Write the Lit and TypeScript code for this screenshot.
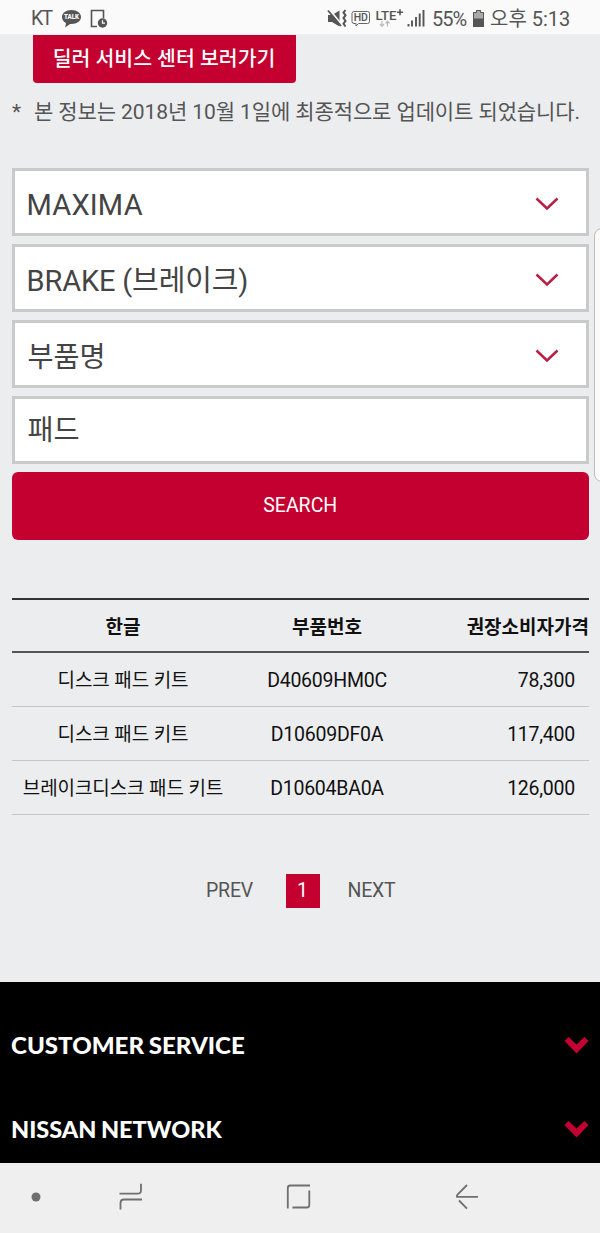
import { LitElement, html, css } from "lit";
import { customElement, property } from "lit/decorators.js";
import { styleMap } from "lit/directives/style-map.js";

const RED = "#c3002f";

@customElement("status-bar")
class StatusBar extends LitElement {
  static styles = css`
    :host { display: flex; align-items: center; height: 35px; box-sizing: border-box; padding: 3px 29px 0 31px;
      background: #fafafa; color: #555; font: 19.5px/32px Roboto, "Noto Sans CJK KR", sans-serif; border-bottom: 1px solid #eee; }
    svg { display: block; flex: none; }
    .carrier { width: 30px; font-size: 19.5px; letter-spacing: -1.8px; }
    .doc { margin-left: 8px; }
    .grow { flex: 1; }
    .pct { margin-left: 7px; width: 36px; font-size: 20px; letter-spacing: -1px; white-space: nowrap; }
    .bat { margin-left: 4px; }
    .time { margin-left: 5px; width: 81px; font-size: 20px; letter-spacing: 0; white-space: nowrap; }
    .talk { font: 900 6.5px Roboto, sans-serif; }
    .hd { font: 500 10.5px Roboto, sans-serif; }
    .lte { font: 500 12px Roboto, sans-serif; }
  `;
  render() {
    return html`
      <span class="carrier">KT</span>
      <svg width="21" height="20" viewBox="0 0 21 20">
        <path d="M10.500 1C5 1 1 4 1 8c0 2.700 1.600 4.800 4 6l-.8 4.600L9 15h1.500c5.500 0 9.500-3 9.500-7s-4-7-9.500-7z" fill="#555"/>
        <text class="talk" x="3" y="10.300" textLength="15" lengthAdjust="spacingAndGlyphs" fill="#fafafa">TALK</text>
      </svg>
      <svg class="doc" width="18" height="20" viewBox="0 0 18 20">
        <path d="M7 17.500H1.500V1.500h12V9" fill="none" stroke="#555" stroke-width="1.600"/>
        <circle cx="12.500" cy="14" r="4.700" fill="#555"/>
        <path d="M12.500 11.300V14.200h2.500" fill="none" stroke="#fafafa" stroke-width="1.200"/>
      </svg>
      <span class="grow"></span>
      <svg width="98" height="20" viewBox="0 0 98 20">
        <path d="M1 6h4l7.500-4.500v16L5 13H1z" fill="#555"/>
        <path d="M2.500 0.500l12 15" stroke="#fafafa" stroke-width="2"/>
        <path d="M1 1.500l13 15.500" stroke="#555" stroke-width="1.800"/>
        <path d="M18.500 1l-2 2.500 2 2.800-2 2.800 2 2.800-2 2.800 2 2.800" fill="none" stroke="#555" stroke-width="2"/>
        <path d="M27 2.500h13.500q2 0 2 2v8q0 2-2 2h-9l-2.500 2.500v-2.500H27q-2 0-2-2v-8q0-2 2-2z" fill="none" stroke="#666" stroke-width="1"/>
        <text class="hd" x="26.800" y="12.300" textLength="14" fill="#555">HD</text>
        <text class="lte" x="48.500" y="10.800" textLength="21" lengthAdjust="spacingAndGlyphs" fill="#555">LTE</text>
        <path d="M70 3.200h6M73 0.200v6" stroke="#555" stroke-width="1.600"/>
        <path d="M55 12v5M53 15l2 2.300 2-2.300M60.500 17.500v-5M58.500 14.500l2-2.300 2 2.300" fill="none" stroke="#bbb" stroke-width="1.200"/>
        <path d="M81.500 17.500v-2.500M85 17.500v-6M89 17.500V8M92.700 17.500V4.500M96.500 17.500V1" stroke="#555" stroke-width="1.900"/>
      </svg>
      <span class="pct">55%</span>
      <svg class="bat" width="13" height="20" viewBox="0 0 13 20">
        <path d="M4 1h5v2h3v15H1V3h3z" fill="#aaa"/>
        <path d="M1 9.500h11V18H1z" fill="#555"/>
        <path d="M4.500 1.500h4v2h3v14h-10v-14h3z" fill="none" stroke="#555"/>
      </svg>
      <span class="time">오후 5:13</span>
    `;
  }
}

@customElement("select-field")
class SelectField extends LitElement {
  @property() value = "";
  @property({ type: Boolean }) arrow = false;
  static styles = css`
    :host { display: flex; align-items: center; justify-content: space-between; height: 68px; box-sizing: border-box;
      border: 3px solid #c9cbcb; background: #fff; padding: 5px 27px 0 11.500px; color: #444;
      font: 29px/40px Roboto, "Noto Sans CJK KR", sans-serif; }
    :host(.wide) { letter-spacing: 0.2px; }
    :host(.mixed) { letter-spacing: -0.15px; }
    :host(.korean) { font-size: 28.3px; line-height: 42px; padding-left: 12.500px; }
    :host(.korean) .v { padding-top: 2px; }
    :host(.plain) { padding-top: 0; padding-bottom: 0; }
    .v { white-space: nowrap; }
    svg { display: block; margin-bottom: 1px; }
  `;
  render() {
    return html`<span class="v">${this.value}</span>
      ${this.arrow ? html`<svg width="24" height="14" viewBox="0 0 24 14">
        <path d="M1.500 1.500l10.500 10 10.500-10" fill="none" stroke="#b91f45" stroke-width="2.500"/></svg>` : ""}`;
  }
}

@customElement("footer-row")
class FooterRow extends LitElement {
  @property() label = "";
  @property({ type: Number }) stretch = 1;
  static styles = css`
    :host { display: flex; align-items: center; justify-content: space-between; height: 84px; padding: 0 11px 0 10.500px; color: #fff;
      font: 900 22px/30px Lato, sans-serif; }
    .l { white-space: nowrap; transform-origin: 0 50%; word-spacing: -1px; padding-top: 1px; }
    svg { display: block; }
  `;
  render() {
    return html`<span class="l" style=${styleMap({ transform: `scaleX(${this.stretch})` })}>${this.label}</span>
      <svg width="25" height="17" viewBox="0 0 25 17"><path d="M0.500 4l4-4 8 7.500 8-7.500 4 4-12 12.500z" fill=${RED}/></svg>`;
  }
}

const ROWS = [
  ["디스크 패드 키트", "D40609HM0C", "78,300"],
  ["디스크 패드 키트", "D10609DF0A", "117,400"],
  ["브레이크디스크 패드 키트", "D10604BA0A", "126,000"],
];

@customElement("app-root")
class AppRoot extends LitElement {
  static styles = css`
    :host { display: flex; flex-direction: column; position: relative; width: 600px; height: 1233px; overflow: hidden;
      background: #ecedef; font-family: Roboto, "Noto Sans CJK KR", sans-serif; }
    .dealer { align-self: flex-start; margin-left: 33px; width: 263px; height: 48px; box-sizing: border-box; border-radius: 0 0 4px 4px;
      padding-right: 1px; background: #c3002f; color: #fff; text-align: center; font-size: 20.500px; font-weight: 500; line-height: 48px; white-space: nowrap; }
    .note { display: flex; margin: 13px 0 0 12px; height: 32px; line-height: 32px; font-size: 21px; letter-spacing: -0.1px; color: #555; white-space: nowrap; }
    .star { width: 22px; }
    .form { display: flex; flex-direction: column; gap: 8px; margin: 40px 11.500px 0 12px; }
    .search { height: 68px; border-radius: 6px; background: #c3002f; color: #fff; text-align: center; font-size: 19.500px; line-height: 67px; }
    .table { margin: 58px 11.500px 0 12px; color: #111; border-top: 2px solid #333; }
    .tr { display: grid; grid-template-columns: 222px 186px 169px; height: 54px; box-sizing: border-box; border-bottom: 1px solid #c5c6c8;
      line-height: 56px; font-size: 19.500px; letter-spacing: -0.25px; text-align: center; white-space: nowrap; }
    .name { font-size: 19px; letter-spacing: -0.1px; }
    .head { height: 53px; font-weight: 700; font-size: 19px; letter-spacing: 0; border-bottom: 2px solid #555; }
    .price { text-align: right; padding-right: 14px; }
    .head .price { padding-right: 0; }
    .pager { display: flex; align-items: center; margin: 59px 0 0 206px; height: 34px; line-height: 34px; font-size: 19.500px; letter-spacing: -0.2px; color: #555; }
    .prev { width: 79.500px; }
    .cur { width: 34px; background: #c3002f; color: #fff; text-align: center; margin-right: 28px; }
    .footer { margin-top: auto; height: 181px; box-sizing: border-box; padding-top: 22px; background: #000; overflow: hidden; }
    .nav { height: 70.500px; background: #efefef; }
    .nav svg { display: block; }
    .handle { position: absolute; left: 594px; top: 228px; width: 20px; height: 252px; border: 1px solid #bbb; border-radius: 8px; background: #fafafa; }
  `;
  render() {
    return html`
      <status-bar></status-bar>
      <div class="dealer">딜러 서비스 센터 보러가기</div>
      <div class="note"><span class="star">*</span><span class="msg">본 정보는 2018년 10월 1일에 최종적으로 업데이트 되었습니다.</span></div>
      <div class="form">
        <select-field class="wide" arrow value="MAXIMA"></select-field>
        <select-field class="mixed" arrow value="BRAKE (브레이크)"></select-field>
        <select-field class="korean" arrow value="부품명"></select-field>
        <select-field class="korean plain" value="패드"></select-field>
        <div class="search">SEARCH</div>
      </div>
      <div class="table">
        <div class="tr head"><span>한글</span><span>부품번호</span><span class="price">권장소비자가격</span></div>
        ${ROWS.map(r => html`<div class="tr"><span class="name">${r[0]}</span><span>${r[1]}</span><span class="price">${r[2]}</span></div>`)}
      </div>
      <div class="pager"><span class="prev">PREV</span><span class="cur">1</span><span>NEXT</span></div>
      <div class="footer">
        <footer-row label="CUSTOMER SERVICE" stretch="1.095"></footer-row>
        <footer-row label="NISSAN NETWORK" stretch="1.067"></footer-row>
      </div>
      <div class="nav">
        <svg width="600" height="70" viewBox="0 0 600 70" fill="none" stroke="#6f6f6f" stroke-width="1.800">
          <circle cx="36" cy="34" r="4.500" fill="#6f6f6f" stroke="none"/>
          <path d="M119.500 30.700h18q3.500 0 3.500-3.500v-6.500M142 36.500h-18q-3.500 0-3.500 3.500v6.500"/>
          <path d="M287.800 45.500V25q0-2.500 2.500-2.500H310M309.300 27.500V42q0 2.500-2.500 2.500H292.500"/>
          <path d="M478 33.800H457q-.5-1.200.5-2.200l9.500-9.600M459 37.500l8 8.200"/>
        </svg>
      </div>
      <div class="handle"></div>
    `;
  }
}
